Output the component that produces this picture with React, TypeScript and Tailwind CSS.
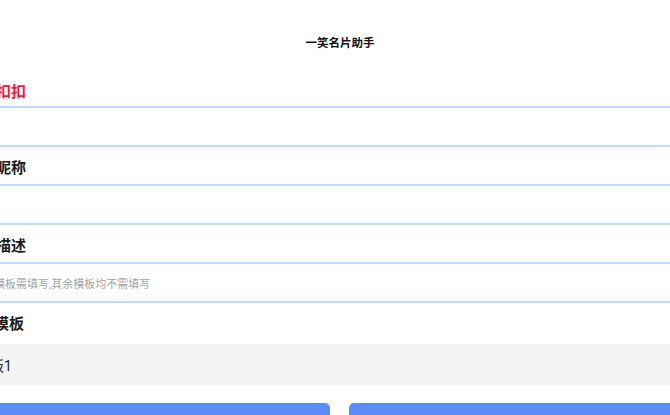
const fields = [
  { label: "扣扣", red: true, placeholder: "" },
  { label: "昵称", red: false, placeholder: "" },
  { label: "描述", red: false, placeholder: "模板需填写,其余模板均不需填写" },
];

const App = () => {
  return (
    <div
      className="w-[670px] h-[415px] overflow-hidden bg-white"
      style={{ fontFamily: 'Roboto, "Noto Sans CJK SC", sans-serif' }}
    >
      <div className="-ml-[20px] w-[720px]">
        {/* Title */}
        <div className="h-[69px] flex items-center justify-center pt-[19px]">
          <h1 className="text-[11.5px] font-bold text-[#111] leading-none">一笑名片助手</h1>
        </div>

        {/* Form rows */}
        {fields.map((f) => (
          <div key={f.label}>
            <div
              className={`h-[37px] flex items-center pl-[16px] ${
                f.red ? "pt-[10px]" : "pt-[5px]"
              }`}
            >
              <span
                className={`text-[15px] font-bold leading-none ${
                  f.red ? "text-[#ff1438]" : "text-[#1a1a1a]"
                }`}
              >
                {f.label}
              </span>
            </div>
            <div className="h-[41px] border-y-2 border-[#bcdcf7] flex items-center pt-[5px] pl-[14px]">
              <input
                className="w-full bg-transparent outline-none text-[11px] text-[#333] placeholder:text-[#a3a3a3]"
                placeholder={f.placeholder}
              />
            </div>
          </div>
        ))}

        {/* Template */}
        <div className="h-[37px] flex items-center pt-[5px] pl-[14px]">
          <span className="text-[15px] font-bold leading-none text-[#1a1a1a]">模板</span>
        </div>
        <div className="mt-[4px] h-[41px] bg-[#f4f4f4] flex items-center pt-[2px]">
          <span className="text-[14px] text-[#222] leading-none -ml-[4px]">模板1</span>
        </div>

        {/* Buttons */}
        <div className="mt-[18px] flex gap-[19px] pl-[10px] pr-[11px]">
          <button className="flex-1 h-[44px] rounded-[5px] bg-[#5b8bf7] text-white text-[15px]">
            生成
          </button>
          <button className="flex-1 h-[44px] rounded-[5px] bg-[#5b8bf7] text-white text-[15px]">
            保存
          </button>
        </div>
      </div>
    </div>
  );
};

export default App;
